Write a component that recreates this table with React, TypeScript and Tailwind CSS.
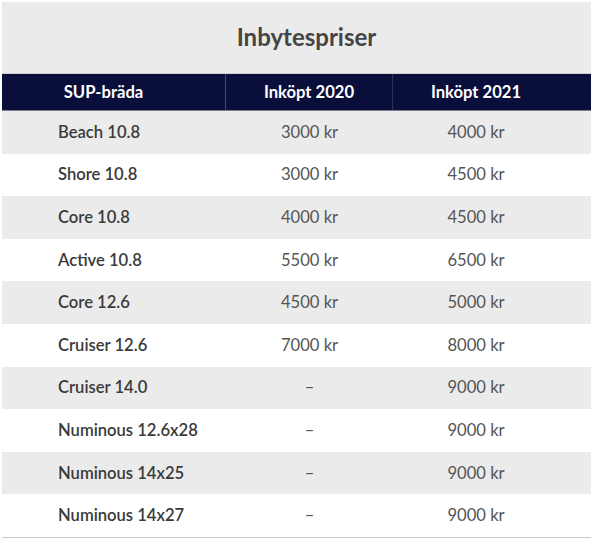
import React from "react";

const rows: [string, string, string][] = [
  ["Beach 10.8", "3000 kr", "4000 kr"],
  ["Shore 10.8", "3000 kr", "4500 kr"],
  ["Core 10.8", "4000 kr", "4500 kr"],
  ["Active 10.8", "5500 kr", "6500 kr"],
  ["Core 12.6", "4500 kr", "5000 kr"],
  ["Cruiser 12.6", "7000 kr", "8000 kr"],
  ["Cruiser 14.0", "–", "9000 kr"],
  ["Numinous 12.6x28", "–", "9000 kr"],
  ["Numinous 14x25", "–", "9000 kr"],
  ["Numinous 14x27", "–", "9000 kr"],
];

export default function App() {
  return (
    <div className="w-[594px] h-[542px] bg-white pt-[2px] pl-[2px]" style={{ fontFamily: "Lato, 'Open Sans', sans-serif" }}>
      <div className="w-[589px] bg-[#ebebeb]">
        <div className="h-[71px] flex items-center justify-center pl-[20px] pb-[1px] text-[24px] font-bold text-[#454545]">
          Inbytespriser
        </div>
        <div className="grid grid-cols-[224px_167px_166px_32px] h-[38px] bg-[#0a0e3b] border-t border-[#cfcfcf] border-b border-b-[#7c7f8e] text-white text-[16.6px] font-bold">
          <div className="flex items-center justify-center pr-[20px] border-r border-[#4b4c5c]">SUP-bräda</div>
          <div className="flex items-center justify-center border-r border-[#2c2f4e]">Inköpt 2020</div>
          <div className="flex items-center justify-center">Inköpt 2021</div>
          <div />
        </div>
      </div>
      <div className="w-[589px] border-b border-[#c8c8c8]">
        {rows.map((r, i) => (
          <div
            key={r[0]}
            className={`grid grid-cols-[224px_167px_166px_32px] h-[42.6px] text-[16.6px] ${i % 2 === 0 ? "bg-[#ebebeb]" : "bg-white"}`}
          >
            <div className="flex items-center pl-[56px] font-semibold text-[#3a3a3a]">{r[0]}</div>
            <div className="flex items-center justify-center text-[#555555]">{r[1]}</div>
            <div className="flex items-center justify-center text-[#555555]">{r[2]}</div>
            <div />
          </div>
        ))}
      </div>
    </div>
  );
}
